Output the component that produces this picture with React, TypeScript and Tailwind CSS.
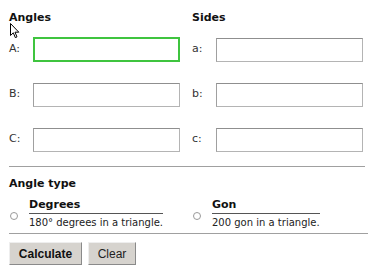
import React from "react";

const font = { fontFamily: '"DejaVu Sans", Verdana, sans-serif' };

function Field({ label, active }: { label: string; active?: boolean }) {
    return (
        <div className="flex items-center h-[25px]">
            <span className="w-[24px] shrink-0 text-[11px] text-[#333]">{label}</span>
            <input
                type="text"
                className={
                    active
                        ? "w-[147px] min-w-0 h-[25px] bg-white border-2 border-[#3fc43f] outline-none"
                        : "w-[147px] min-w-0 h-[24px] bg-white border border-[#b4b4b4] border-t-[#8f8f8f] border-l-[#a0a0a0] outline-none"
                }
            />
        </div>
    );
}

function Option({ title, text }: { title: string; text: string }) {
    return (
        <div className="flex items-start">
            <span className="mt-[14px] ml-[1px] w-[8px] h-[8px] shrink-0 rounded-full border border-[#9a9a9a] bg-white" />
            <div className="ml-[11px] inline-flex flex-col">
                <span className="text-[11px] font-bold text-[#111] leading-[13px] pb-[2px] border-b border-[#555]">{title}</span>
                <span className="text-[10px] text-[#222] leading-[13px] pt-[2px] whitespace-nowrap">{text}</span>
            </div>
        </div>
    );
}

export default function App() {
    return (
        <div className="relative w-[375px] h-[280px] bg-white pl-[9px] pt-[11px] overflow-hidden" style={font}>
            <div className="grid grid-cols-[171px_171px] gap-x-[12px]">
                <div>
                    <div className="text-[11px] font-bold text-[#111] leading-[14px]">Angles</div>
                    <div className="mt-[12px] flex flex-col gap-[20px]">
                        <Field label="A:" active />
                        <Field label="B:" />
                        <Field label="C:" />
                    </div>
                </div>
                <div>
                    <div className="text-[11px] font-bold text-[#111] leading-[14px]">Sides</div>
                    <div className="mt-[12px] flex flex-col gap-[20px]">
                        <Field label="a:" />
                        <Field label="b:" />
                        <Field label="c:" />
                    </div>
                </div>
            </div>

            <div className="mt-[14px] w-[356px] border-t border-[#a0a0a0]" />

            <div className="mt-[10px] text-[11px] font-bold text-[#111] leading-[14px]">Angle type</div>
            <div className="mt-[7px] grid grid-cols-[183px_170px]">
                <Option title="Degrees" text="180° degrees in a triangle." />
                <Option title="Gon" text="200 gon in a triangle." />
            </div>

            <div className="mt-[4px] w-[359px] border-t border-[#a0a0a0]" />

            <div className="mt-[8px] flex gap-[6px]" style={{ fontFamily: '"Liberation Sans", Arial, sans-serif' }}>
                <button className="w-[73px] h-[23px] bg-[#d6d3ce] text-[12px] font-bold text-[#111] border border-[#eeeeee] border-r-[#8a8a8a] border-b-[#8a8a8a]">
                    Calculate
                </button>
                <button className="w-[48px] h-[23px] bg-[#d6d3ce] text-[12px] text-[#222] border border-[#eeeeee] border-r-[#8a8a8a] border-b-[#8a8a8a]">
                    Clear
                </button>
            </div>

            {/* mouse pointer captured in the screenshot */}
            <svg className="absolute left-[10px] top-[23px]" width="10" height="16" viewBox="0 0 10 16">
                <path d="M0.5 0.5 L0.5 12.5 L3.3 9.8 L5.3 14.6 L7 13.9 L5 9.2 L8.8 9.2 Z" fill="white" stroke="black" strokeWidth="1" strokeLinejoin="round" />
            </svg>
        </div>
    );
}
